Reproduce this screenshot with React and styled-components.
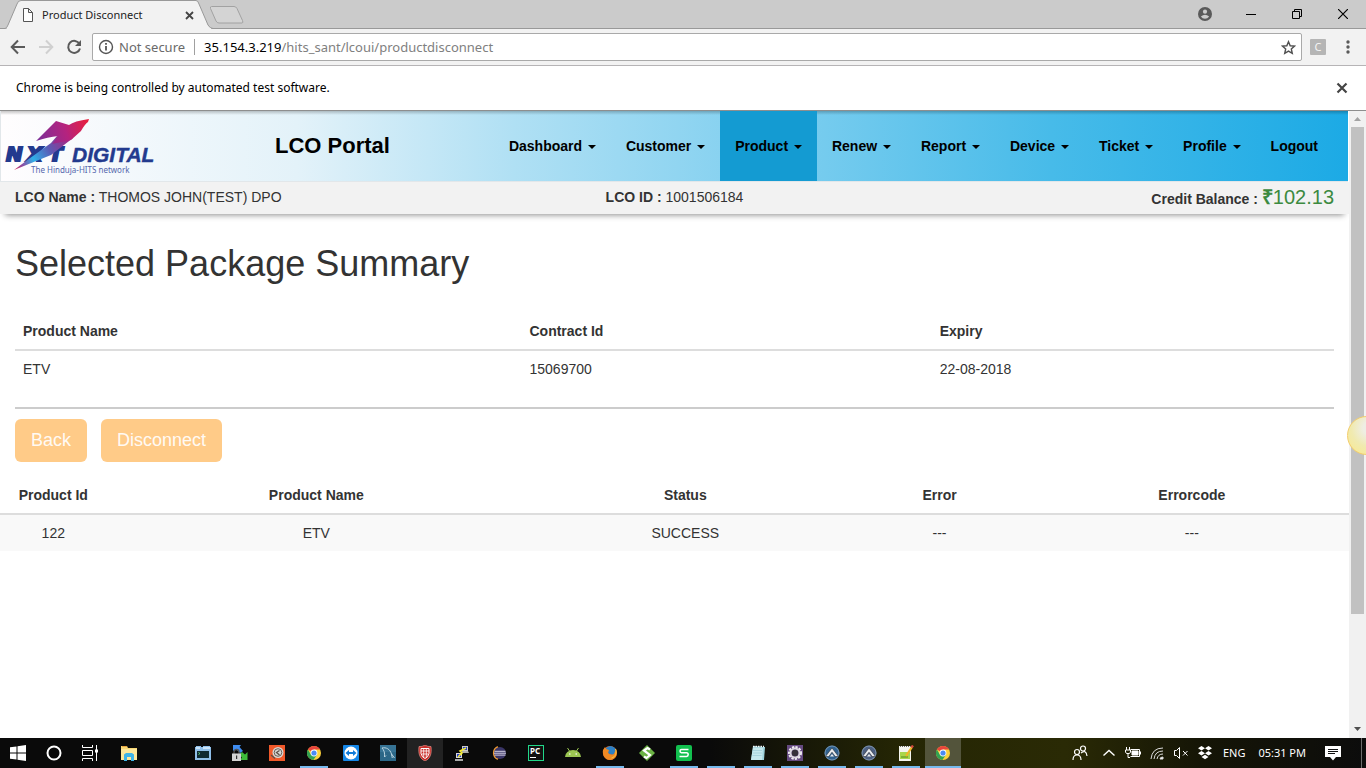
import React from "react";
import styled, { createGlobalStyle } from "styled-components";

const ui = '"Noto Sans", "Open Sans", sans-serif';
const arial = '"Liberation Sans", Arial, sans-serif';

const GlobalStyle = createGlobalStyle`
  *, *::before, *::after { box-sizing: border-box; }
  body { margin: 0; background: #fff; font-family: ${arial}; font-size: 14px; line-height: 20px; color: #333; }
  button, input { font: inherit; color: inherit; margin: 0; padding: 0; border: 0; background: none; }
  svg { display: block; flex: none; }
`;

const Desktop = styled.div`
  position: relative;
  display: flex;
  flex-direction: column;
  min-height: 100vh;
  overflow: hidden;
`;

/* ---------- browser chrome ---------- */
const TabStrip = styled.header`
  display: flex;
  height: 29px;
  padding-left: 5px;
  background: #cbcbcb;
  border-bottom: 1px solid #999;
  font-family: ${ui};
`;
const Tab = styled.div`
  position: relative;
  display: flex;
  align-items: center;
  width: 208px;
  height: 29px;
  padding: 1px 18px 0 17px;
  font-size: 11px;
  color: #222;
`;
const TabShape = styled.svg`
  position: absolute;
  inset: 0;
`;
const TabTitle = styled.span`
  position: relative;
  flex: 1;
  padding-left: 8px;
  white-space: nowrap;
`;
const Layer = styled.span`
  position: relative;
  display: flex;
`;
const IconButton = styled.button`
  position: relative;
  display: flex;
  align-items: center;
  justify-content: center;
  width: ${(p) => p.$w || 16}px;
  height: ${(p) => p.$h || 16}px;
`;
const WindowControls = styled.div`
  display: flex;
  align-items: center;
  margin-left: auto;
`;
const Toolbar = styled.div`
  display: flex;
  align-items: center;
  height: 37px;
  padding: 0 4px;
  background: #f2f2f2;
  border-bottom: 1px solid #b6b4b6;
  font-family: ${ui};
  font-size: 13px;
`;
const AddressBar = styled.div`
  display: flex;
  align-items: center;
  flex: 1;
  height: 28px;
  margin: 0 8px 0 4px;
  padding: 0 5px;
  background: #fff;
  border: 1px solid #a9a9a9;
  border-radius: 2px;
`;
const Security = styled.span`
  margin-left: 5px;
  padding-right: 9px;
  color: #6a6a6a;
  border-right: 1px solid #a0a0a0;
  line-height: 16px;
`;
const Host = styled.label`
  padding-left: 9px;
  color: #000;
`;
const PathInput = styled.input`
  flex: 1;
  min-width: 0;
  color: #808080;
`;
const InfoBar = styled.div`
  display: flex;
  align-items: center;
  justify-content: space-between;
  height: 45px;
  padding: 0 16px;
  background: #fff;
  border-bottom: 1px solid #8e8e8e;
  font-family: ${ui};
  font-size: 12px;
  color: #000;
`;

/* ---------- page ---------- */
const Viewport = styled.div`
  display: flex;
  flex: 1;
`;
const Page = styled.main`
  flex: 1;
  min-width: 0;
`;
const SiteHeader = styled.div`
  display: flex;
  height: 71px;
  margin-right: 1px;
  padding-right: 15px;
  border: 1px solid #e2e7ea;
  border-width: 0 0 1px 1px;
  background: linear-gradient(rgba(0, 0, 0, 0.22), rgba(0, 0, 0, 0) 4px),
    linear-gradient(to right, #fffdfe 0%, #e3f2f9 22%, #b0e0f4 38%, #7dceef 58%, #47bbe9 78%, #1caae5 100%);
`;
const SiteTitle = styled.div`
  padding-left: 114px;
  font-size: 22px;
  font-weight: bold;
  line-height: 70px;
  color: #000;
`;
const Nav = styled.nav`
  display: flex;
  margin-left: auto;
  font-weight: bold;
  color: #000;
`;
const NavButton = styled.button`
  padding: 0 15px;
  background: ${(p) => (p.$active ? "#149bd2" : "none")};
  &::after {
    content: "";
    display: inline-block;
    margin-left: 2px;
    vertical-align: middle;
    border: 4px solid transparent;
    border-top-color: #000;
    border-bottom: 0;
  }
`;
const NavLink = styled.a`
  padding: 0 15px;
  line-height: 70px;
  color: #000;
  text-decoration: none;
`;
const AccountBar = styled.div`
  display: grid;
  grid-template-columns: 1fr auto 1fr;
  height: 32px;
  padding: 0 15px;
  line-height: 30px;
  background: #f2f2f2;
  box-shadow: 0 6px 6px -5px rgba(0, 0, 0, 0.45);
`;
const Credit = styled.div`
  text-align: right;
`;
const Amount = styled.span`
  font-size: 20px;
  color: #3c8a3f;
`;
const Content = styled.section`
  padding: 0 15px;
`;
const Heading = styled.h1`
  margin: 0;
  padding: 30px 0 29px;
  font-size: 36px;
  font-weight: normal;
  line-height: 40px;
`;
const DataTable = styled.table`
  width: 100%;
  table-layout: fixed;
  border-collapse: collapse;
  text-align: ${(p) => p.$align || "left"};
  th, td { padding: 8px; }
  th { border-bottom: 2px solid #ddd; text-align: inherit; }
  td { background: ${(p) => (p.$striped ? "#f9f9f9" : "none")}; }
`;
const NarrowTh = styled.th`
  && { padding: 8px 0; }
`;
const Rule = styled.hr`
  margin: 20px 0 10px;
  border: 0;
  border-top: 2px solid #ccc;
`;
const Actions = styled.div`
  display: flex;
  gap: 14px;
  margin-bottom: 15px;
`;
const ActionButton = styled.button`
  height: 43px;
  padding: 0 16px 2px;
  font-size: 18px;
  color: #fffaf4;
  background: #ffcb88;
  border-radius: 6px;
`;
const Scrollbar = styled.div`
  display: flex;
  flex-direction: column;
  width: 17px;
  padding: 0 2px;
  background: #f1f1f1;
`;
const ScrollButton = styled.button`
  display: flex;
  align-items: center;
  justify-content: center;
  height: ${(p) => p.$h}px;
`;
const Thumb = styled.div`
  flex: 487;
  background: #c1c1c1;
`;
const Track = styled.div`
  flex: 106;
`;
const TouchBubble = styled.div`
  position: absolute;
  top: 416px;
  right: -20px;
  width: 39px;
  height: 39px;
  border: 1px solid #f3cd6c;
  border-radius: 50%;
  background: radial-gradient(circle at 60% 30%, #efeee4 20%, #f0eab0 55%, #fbe98a 100%);
`;

/* ---------- taskbar ---------- */
const Taskbar = styled.footer`
  display: flex;
  height: 30px;
  background: linear-gradient(to right, #0a0a0a 0%, #0a0a0a 52%, #252604 66%, #2a2a05 78%, #151506 88%, #0c0c0c 100%);
  font-family: ${ui};
  font-size: 12px;
  color: #fff;
`;
const SystemButtons = styled.div`
  display: flex;
  margin-right: 3px;
`;
const Apps = styled.div`
  display: flex;
  gap: 1px;
`;
const AppButton = styled.button`
  display: flex;
  align-items: center;
  justify-content: center;
  width: 36px;
  height: 30px;
  background: ${(p) => (p.$lit ? p.$lit : "none")};
  position: relative;
  &::after {
    content: "";
    position: absolute;
    bottom: 0;
    left: ${(p) => (p.$wide ? 0 : 4)}px;
    right: ${(p) => (p.$wide ? 0 : 4)}px;
    height: 2px;
    background: ${(p) => (p.$open ? "#76b9ed" : "none")};
  }
`;
const Slot = styled.span`
  width: 36px;
`;
const Tray = styled.div`
  display: flex;
  align-items: center;
  gap: 8px;
  margin-left: auto;
  padding-right: 4px;
`;
const People = styled.span`
  margin-right: 5px;
`;
const TrayText = styled.span`
  padding-left: ${(p) => p.$pad || 0}px;
  font-size: 11px;
  white-space: nowrap;
`;
const PeekEdge = styled.span`
  width: 1px;
  height: 30px;
  margin-left: 12px;
  background: #6c6c6c;
`;

const Svg = ({ s = 16, children, ...rest }) => (
  <svg width={s} height={s} viewBox="0 0 16 16" fill="none" aria-hidden="true" {...rest}>{children}</svg>
);

const Chrome = () => (
  <Svg>
    <circle cx="8" cy="8" r="7" fill="#fdd13b" />
    <path d="M8 8 1.9 4.5A7 7 0 0 1 14.1 4.6H8z" fill="#e8453c" />
    <path d="M1.9 4.5A7 7 0 0 0 7.4 15L11 9.8 8 8 5 9.7z" fill="#31a252" />
    <circle cx="8" cy="8" r="3.4" fill="#fff" />
    <circle cx="8" cy="8" r="2.6" fill="#4a8af4" />
  </Svg>
);

const AutoIt = ({ tone }) => (
  <Svg>
    <circle cx="8" cy="8" r="7.5" fill={tone} />
    <circle cx="8" cy="8" r="7" stroke="#9fb7cc" strokeWidth=".6" />
    <path d="M1.500 11.500 8 3l6.500 8.500h-3.300L8 7.200l-3.200 4.300z" fill="#e8ebee" stroke="#1a1d20" strokeWidth=".5" />
    <path d="M6 11.500 8 9l2 2.500z" fill="#e8ebee" />
  </Svg>
);

const icons = {
  explorer: (
    <Svg><path d="M0 1h6l1 2h9v12H0z" fill="#f8d775" /><path d="M0 4h16v11H0z" fill="#fde79b" /><path d="M1 1h5v1H1z" fill="#e8a33d" /><path d="M3 16V9.500L5 8h6l2 1.500V16h-3v-4H6v4z" fill="#3fb4e8" /></Svg>
  ),
  terminal: (
    <Svg><path d="M0 2h1V1h5v1h2V1h7v1h1v13H0z" fill="#8fbfe9" /><path d="M1 2h4v2H1zM8 2h7v2H8z" fill="#c9e2f7" /><path d="M2 6h12v7H2z" fill="#0f2a33" /><path d="m3.500 7.500 1.500 1-1.500 1" stroke="#5fd07a" /></Svg>
  ),
  sync: (
    <Svg><path d="M1 0h8L7.500 2 11 6 8 8 4 4 1 6z" fill="#3f8df0" /><path d="M15.500 7v8H8l2-2.500L7 9.500 10 7l3 2.500z" fill="#3dbb3b" /><path d="M2 9V7a2.500 2.500 0 0 1 5 0v2" stroke="#555" strokeWidth="1.300" /><path d="M0 8.500h9V16H0z" fill="#d4d4d4" /><path d="M4 10.500h1.200V14H4z" fill="#333" /></Svg>
  ),
  camtasia: (
    <Svg><path d="M0 0h16v16H0z" fill="#f1592a" /><circle cx="9" cy="7.500" r="5.500" fill="#d8d8d4" /><circle cx="9" cy="7.500" r="3.800" stroke="#6a5f58" /><path d="M10.500 5.500 7.500 7.500l3 2.500M2 10l4 3.500" stroke="#5d514a" strokeWidth="1.300" /></Svg>
  ),
  chrome: <Chrome />,
  teamviewer: (
    <Svg><rect width="16" height="16" rx="1" fill="#1587e8" /><circle cx="8" cy="8" r="6.500" fill="#fff" /><path d="m2.500 8 3.500-3v2h4V5l3.500 3-3.500 3V9H6v2z" fill="#117bd9" /></Svg>
  ),
  mysql: (
    <Svg><path d="M0 0h16v16H0z" fill="#2b6787" /><path d="M0 0h16v7H0z" fill="#3e7c9c" opacity=".6" /><path d="M2 3c4-1 8 1 9.500 6l3 4M2 3c2 2 3 5 2.500 9L6 10.500M11.500 9c.5 1.500.3 3 .8 4" stroke="#b9d3de" /></Svg>
  ),
  shield: (
    <Svg><path d="M2 1.500Q5 2 8 0q3 2 6 1.500C15 9 13 14 8 16 3 14 1 9 2 1.500z" fill="#c9302b" stroke="#f0a39a" strokeWidth=".6" /><path d="M4 3.500h8v5q-1 4-4 5-3-1-4-5z" stroke="#fff" /><path d="M6.700 3.500v9M9.300 3.500v9M4 6h8M4.500 9h7" stroke="#fff" strokeWidth=".8" /></Svg>
  ),
  putty: (
    <Svg><path d="M8 1h6v5H8z" fill="#c9c9c9" /><path d="M9 2h4v3H9z" fill="#2239c7" /><path d="M7 6h7l1 2H8zM1 14h8v2H1z" fill="#aaa" /><path d="M2 8h6v5H2z" fill="#d8d8d8" /><path d="M3 9h4v3H3z" fill="#2239c7" /><path d="m12 3-6 3 2 2-4 4" stroke="#f5ea2e" strokeWidth="1.600" /></Svg>
  ),
  eclipseIde: (
    <Svg><path d="M7 2a6.500 6.500 0 0 0 0 12" stroke="#ee9a32" strokeWidth="2.200" /><circle cx="9" cy="8" r="6" fill="#3a3567" /><path d="M3.500 6.300h11M3 8.200h12M3.500 10.100h11" stroke="#e6e3f0" strokeWidth=".9" /></Svg>
  ),
  android: (
    <Svg><path d="M0 12a8 7 0 0 1 16 0z" fill="#9bc552" /><path d="m2.500 3 2 3M13.500 3l-2 3" stroke="#9bc552" /><circle cx="4.800" cy="9" r=".8" fill="#fff" /><circle cx="11.200" cy="9" r=".8" fill="#fff" /></Svg>
  ),
  firefox: (
    <Svg><circle cx="8" cy="8" r="7" fill="#e8641b" /><path d="M4 3a6 6 0 0 1 10 2l-2 5-5-1-2-3z" fill="#2d80c5" /><path d="M1 5 3 2l1 2 3 1-1 3c2 2 4 2 6 1l2-5c2 5 0 10-5 11C3 15.500 0 10 1 5z" fill="#f08a24" /><path d="M13.500 4c1.500 4 0 8-4 9" stroke="#fbc840" /></Svg>
  ),
  scratch: (
    <Svg><path d="m8 0 8 8-8 8-8-8z" fill="#6bb344" /><path d="M11 4.500 8.500 3 5 5.500 11 10l-3.500 3L5 11.500" stroke="#fff" strokeWidth="2.200" /></Svg>
  ),
  wps: (
    <Svg><rect width="16" height="16" rx="2" fill="#12c04f" /><path d="M12.500 4.500H5.500Q4 4.500 4 6t1.500 1.800h5q1.700 0 1.700 1.800t-1.700 1.900h-7" stroke="#fff" strokeWidth="1.500" /></Svg>
  ),
  notes: (
    <Svg><path d="m3 1 12 1-1 13H1z" fill="#9ed2dc" /><path d="M3 3h10l-1 12H1z" fill="#c5e8ed" /><path d="M3 1.500h11" stroke="#f3f8f9" strokeWidth="1.500" strokeDasharray="1.500 1" /><path d="M3 5.500h9M3 8h9M2.500 10.500h9" stroke="#94c5d0" strokeWidth=".6" /></Svg>
  ),
  gear: (
    <Svg><path d="M0 0h16v16H0z" fill="#654a80" /><circle cx="8" cy="8" r="6" stroke="#f0eef2" strokeWidth="2" strokeDasharray="2.300 1.200" /><circle cx="8" cy="8" r="4.500" stroke="#dcd8df" strokeWidth="2" /><circle cx="8" cy="8" r="3.200" fill="#36313a" /></Svg>
  ),
  autoit: <AutoIt tone="#30618f" />,
  autoitDim: <AutoIt tone="#4c5f80" />,
  notepadpp: (
    <Svg><path d="M1 1h12v15H1z" fill="#f4f5ef" /><path d="M2 7h10v7H2z" fill="#a9d64c" /><path d="M3 12h7" stroke="#548a1b" /><path d="M2 1.500h11" stroke="#666" strokeDasharray="1 1" /><path d="m14 2-6 9" stroke="#f0b429" strokeWidth="2.200" /><path d="m15 .5-1.500 2" stroke="#d14a3e" strokeWidth="2.400" /></Svg>
  ),
};

const apps = [
  ["File Explorer", "explorer"],
  [null],
  ["Terminal", "terminal"],
  ["Sync", "sync"],
  ["Recorder", "camtasia"],
  ["Chrome", "chrome", { $open: true }],
  ["TeamViewer", "teamviewer"],
  ["MySQL Workbench", "mysql"],
  ["Security", "shield", { $lit: "#222" }],
  ["PuTTY", "putty"],
  ["Eclipse", "eclipseIde"],
  ["PyCharm", "pycharm"],
  ["Android", "android"],
  ["Firefox", "firefox", { $open: true }],
  ["Snippets", "scratch"],
  ["Spreadsheets", "wps", { $open: true }],
  ["Background app", "none", { $open: true }],
  ["Notepad", "notes", { $open: true }],
  ["Settings", "gear", { $open: true }],
  ["Script editor", "autoit", { $open: true }],
  ["Window info", "autoitDim", { $open: true }],
  ["Notepad++", "notepadpp", { $open: true }],
  ["Chrome test window", "chrome", { $open: true, $wide: true, $lit: "#53543b" }],
];

const PyCharmBadge = styled.span`
  width: 16px;
  height: 16px;
  padding: 0 1px;
  border: 1px solid #21d789;
  background: #111;
  font: bold 8px/9px ${ui};
  text-align: left;
  &::after {
    content: "";
    display: block;
    width: 6px;
    height: 1px;
    margin-top: 2px;
    background: #fff;
  }
`;
const ExtensionButton = styled.button`
  width: 16px;
  height: 16px;
  margin-right: 8px;
  border-radius: 1px;
  background: #b5b5b5;
  color: #f4f4f4;
  font-size: 11px;
  line-height: 16px;
`;

const Logo = () => (
  <svg width="160" height="70" viewBox="0 0 160 70" role="img" aria-label="NXT Digital, The Hinduja-HITS network">
    <defs>
      <linearGradient id="wing" x1="36" y1="30" x2="88" y2="12" gradientUnits="userSpaceOnUse">
        <stop offset="0" stopColor="#7a2f98" /><stop offset=".55" stopColor="#b4237f" /><stop offset="1" stopColor="#e91f3c" />
      </linearGradient>
      <linearGradient id="tail" x1="66" y1="26" x2="13" y2="58" gradientUnits="userSpaceOnUse">
        <stop offset="0" stopColor="#a82784" /><stop offset=".35" stopColor="#5a5ab4" /><stop offset=".65" stopColor="#2fb0e8" /><stop offset=".85" stopColor="#8a4da4" /><stop offset="1" stopColor="#d82756" />
      </linearGradient>
    </defs>
    <g fill="#233a8e" stroke="#233a8e" strokeWidth="2" fontFamily="DejaVu Sans" fontWeight="bold" fontStyle="italic" fontSize="20">
      <text x="5" y="50">N</text><text x="26" y="50">X</text><text x="48" y="50">T</text>
    </g>
    <text x="71" y="51" fill="#233a8e" stroke="#233a8e" strokeWidth=".4" fontFamily="Liberation Sans" fontWeight="bold" fontStyle="italic" fontSize="21">DIGITAL</text>
    <path d="M56 25 72 27 50 44 13 59 25 50 50 32z" fill="url(#tail)" />
    <path d="M35 30 55 10 68 14Q73 10 88 8L87 11Q84 13 80 20L70 29 51 33 57 25Q47 26 35 30z" fill="url(#wing)" />
    <text x="30" y="62" fill="#5467ad" fontFamily="Noto Sans" fontSize="8">The Hinduja-HITS network</text>
  </svg>
);

const menu = ["Dashboard", "Customer", "Product", "Renew", "Report", "Device", "Ticket", "Profile"];

export default function App() {
  return (
    <Desktop>
      <GlobalStyle />
      <TabStrip>
        <Tab>
          <TabShape width="208" height="29" viewBox="0 0 208 29" aria-hidden="true">
            <path d="M0 28.500Q2 28 3 25L12 4Q13 .5 16 .5H191Q193 .5 194 4L203 25Q205 28.500 208 28.500" fill="#f2f2f2" stroke="#999" />
            <path d="M2 28.500h204" stroke="#f2f2f2" />
          </TabShape>
          <Layer>
            <svg width="12" height="14" viewBox="0 0 12 14" fill="#fff" stroke="#555" aria-hidden="true"><path d="M1.500.5h5l4 4v9h-9zM6.500.5v4h4" /></svg>
          </Layer>
          <TabTitle>Product Disconnect</TabTitle>
          <IconButton aria-label="Close tab" $w={12}>
            <Svg s={9} viewBox="0 0 9 9"><path d="m1 1 7 7M8 1 1 8" stroke="#444" strokeWidth="1.800" /></Svg>
          </IconButton>
        </Tab>
        <IconButton aria-label="New tab" $w={28} $h={29}>
          <svg width="36" height="18" viewBox="0 0 36 18"><path d="M2.500.5H25Q27 .5 28 2.500l5.500 12Q34.500 17 33 17H10Q8 17 7 15L1.500 2.500Q1 .5 2.500.5z" fill="#d4d4d4" stroke="#a2a2a2" /></svg>
        </IconButton>
        <WindowControls>
          <IconButton aria-label="Profile" $w={46} $h={26}>
            <Svg s={14}><circle cx="8" cy="8" r="8" fill="#5a5a5a" /><circle cx="8" cy="5.300" r="2.400" fill="#cbcbcb" /><path d="M3.300 10.800Q8 7 12.700 10.800 11 13.500 8 13.500T3.300 10.800z" fill="#cbcbcb" /></Svg>
          </IconButton>
          <IconButton aria-label="Minimize" $w={46} $h={26}>
            <svg width="10" height="10"><path d="M0 5.500h10" stroke="#000" /></svg>
          </IconButton>
          <IconButton aria-label="Restore" $w={46} $h={26}>
            <svg width="10" height="10" fill="none" stroke="#000"><path d="M.5 2.500h7v7h-7zM2.500 2.500v-2h7v7h-2" /></svg>
          </IconButton>
          <IconButton aria-label="Close window" $w={46} $h={26}>
            <svg width="10" height="10"><path d="m0 0 10 10M10 0 0 10" stroke="#000" strokeWidth="1.200" /></svg>
          </IconButton>
        </WindowControls>
      </TabStrip>

      <Toolbar>
        <IconButton aria-label="Back" $w={28} $h={28}>
          <Svg><path d="M15 8H2M8 1.500 1.700 8 8 14.500" stroke="#5a5a5a" strokeWidth="2" /></Svg>
        </IconButton>
        <IconButton aria-label="Forward" $w={28} $h={28}>
          <Svg><path d="M1 8h13M8 1.500 14.300 8 8 14.500" stroke="#d0d0d0" strokeWidth="2" /></Svg>
        </IconButton>
        <IconButton aria-label="Reload" $w={28} $h={28}>
          <Svg><path d="M13.500 5A6 6 0 1 0 14 9.500" stroke="#5a5a5a" strokeWidth="2" /><path d="M15 1v6H9z" fill="#5a5a5a" /></Svg>
        </IconButton>
        <AddressBar>
          <Svg><circle cx="8" cy="8" r="6.500" stroke="#555" strokeWidth="1.400" /><path d="M8 7v4.500M8 4v1.800" stroke="#555" strokeWidth="1.800" /></Svg>
          <Security>Not secure</Security>
          <Host htmlFor="url">35.154.3.219</Host>
          <PathInput id="url" defaultValue="/hits_sant/lcoui/productdisconnect" />
          <IconButton aria-label="Bookmark this page">
            <Svg s={15}><path d="m8 1.800 1.800 4.300 4.700.4-3.500 3.100 1 4.600L8 11.800l-4 2.400 1-4.600-3.500-3.100 4.700-.4z" stroke="#505050" strokeWidth="1.500" /></Svg>
          </IconButton>
        </AddressBar>
        <ExtensionButton>C</ExtensionButton>
        <IconButton aria-label="Menu" $w={28} $h={28}>
          <Svg><circle cx="8" cy="3" r="1.700" fill="#5a5a5a" /><circle cx="8" cy="8" r="1.700" fill="#5a5a5a" /><circle cx="8" cy="13" r="1.700" fill="#5a5a5a" /></Svg>
        </IconButton>
      </Toolbar>

      <InfoBar>
        Chrome is being controlled by automated test software.
        <IconButton aria-label="Dismiss">
          <Svg><path d="m3.500 3.500 9 9M12.500 3.500l-9 9" stroke="#444" strokeWidth="2.200" /></Svg>
        </IconButton>
      </InfoBar>

      <Viewport>
        <Page>
          <SiteHeader>
            <Logo />
            <SiteTitle>LCO Portal</SiteTitle>
            <Nav>
              {menu.map((m) => (
                <NavButton key={m} $active={m === "Product"}>{m + " "}</NavButton>
              ))}
              <NavLink href="#logout">Logout</NavLink>
            </Nav>
          </SiteHeader>
          <AccountBar>
            <div><b>LCO Name :</b> THOMOS JOHN(TEST) DPO</div>
            <div><b>LCO ID :</b> 1001506184</div>
            <Credit><b>Credit Balance :</b> <Amount><b>₹</b>102.13</Amount></Credit>
          </AccountBar>
          <Content>
            <Heading>Selected Package Summary</Heading>
            <DataTable>
              <colgroup><col style={{ width: "38.4%" }} /><col style={{ width: "31.1%" }} /><col /></colgroup>
              <thead><tr><th>Product Name</th><th>Contract Id</th><th>Expiry</th></tr></thead>
              <tbody><tr><td>ETV</td><td>15069700</td><td>22-08-2018</td></tr></tbody>
            </DataTable>
            <Rule />
            <Actions>
              <ActionButton>Back</ActionButton>
              <ActionButton>Disconnect</ActionButton>
            </Actions>
          </Content>
          <DataTable $align="center" $striped>
            <colgroup>
              <col style={{ width: "7.9%" }} /><col style={{ width: "31.1%" }} /><col style={{ width: "23.6%" }} /><col style={{ width: "14.1%" }} /><col />
            </colgroup>
            <thead>
              <tr><NarrowTh>Product Id</NarrowTh><th>Product Name</th><th>Status</th><th>Error</th><th>Errorcode</th></tr>
            </thead>
            <tbody>
              <tr><td>122</td><td>ETV</td><td>SUCCESS</td><td>---</td><td>---</td></tr>
            </tbody>
          </DataTable>
        </Page>
        <Scrollbar>
          <ScrollButton aria-label="Scroll up" $h={16}><svg width="7" height="4"><path d="M0 4 3.500 0 7 4z" fill="#a3a3a3" /></svg></ScrollButton>
          <Thumb />
          <Track />
          <ScrollButton aria-label="Scroll down" $h={18}><svg width="7" height="4"><path d="M0 0h7L3.500 4z" fill="#505050" /></svg></ScrollButton>
        </Scrollbar>
      </Viewport>
      <TouchBubble />

      <Taskbar>
        <SystemButtons>
          <AppButton aria-label="Start"><Svg><path d="M0 2.300 6.500 1.400v6.100H0zM7.500 1.200 16 0v7.500H7.500zM0 8.500h6.500v6.100L0 13.700zM7.500 8.500H16V16l-8.500-1.200z" fill="#fff" /></Svg></AppButton>
          <AppButton aria-label="Search"><Svg><circle cx="8" cy="8" r="6.500" stroke="#fff" strokeWidth="2" /></Svg></AppButton>
          <AppButton aria-label="Task view"><Svg><path d="M.5 0v2.500h10V0M.5 16v-2.500h10V16M.5 5.500h10v5H.5zM14.500 0v16" stroke="#fff" /><path d="M13 4.500h3v3h-3z" fill="#fff" /></Svg></AppButton>
        </SystemButtons>
        <Apps>
          {apps.map(([name, icon, flags], i) =>
            name ? (
              <AppButton key={i} aria-label={name} {...flags}>
                {icon === "pycharm" ? <PyCharmBadge>PC</PyCharmBadge> : icons[icon]}
              </AppButton>
            ) : (
              <Slot key={i} />
            )
          )}
        </Apps>
        <Tray>
          <People><Svg stroke="#fff" strokeWidth="1.200"><circle cx="11" cy="3.500" r="2.500" /><circle cx="5" cy="7" r="2.500" /><path d="M1 15q0-5 4-5t4 5M9 8q5-4 6 3" /></Svg></People>
          <Svg stroke="#fff" strokeWidth="1.400"><path d="m2.500 10.500 5.500-5 5.500 5" /></Svg>
          <Svg stroke="#fff"><path d="M5.500 4.500h9v7h-9M15.500 6.500v3M1.500 2v3M4.500 2v3M.5 5h5v2l-1 1.500h-3L.5 7zM3 8v4.500h2" /><path d="M7 6h6v4H7z" fill="#fff" /></Svg>
          <Svg stroke="#ddd"><path d="M2 14Q3 3 14 3M5 14q1-8 9-8M8 14q1-5 6-5" /><path d="M11 14q0-2 3-2v2z" fill="#fff" /></Svg>
          <Svg stroke="#fff"><path d="M1.500 5.500h2l3-3v11l-3-3h-2zM10 6l4.500 4.500M14.500 6 10 10.500" /></Svg>
          <Svg fill="#fff"><path d="m4.500 1 3.500 2.300L4.500 5.600 1 3.300zM11.500 1 15 3.300l-3.500 2.300L8 3.300zM4.500 6 8 8.300l-3.500 2.300L1 8.300zM11.500 6 15 8.300l-3.500 2.300L8 8.300zM8 9.700l3.500 2.300L8 14.300 4.500 12z" /></Svg>
          <TrayText $pad={2}>ENG</TrayText>
          <TrayText $pad={5}>05:31 PM</TrayText>
          <TrayText $pad={11}><Svg><path d="M0 1h16v11h-5l-3 3.500L5 12H0z" fill="#fff" /><path d="M3 4.500h10M3 6.500h10M3 8.500h7" stroke="#111" /></Svg></TrayText>
          <PeekEdge />
        </Tray>
      </Taskbar>
    </Desktop>
  );
}
